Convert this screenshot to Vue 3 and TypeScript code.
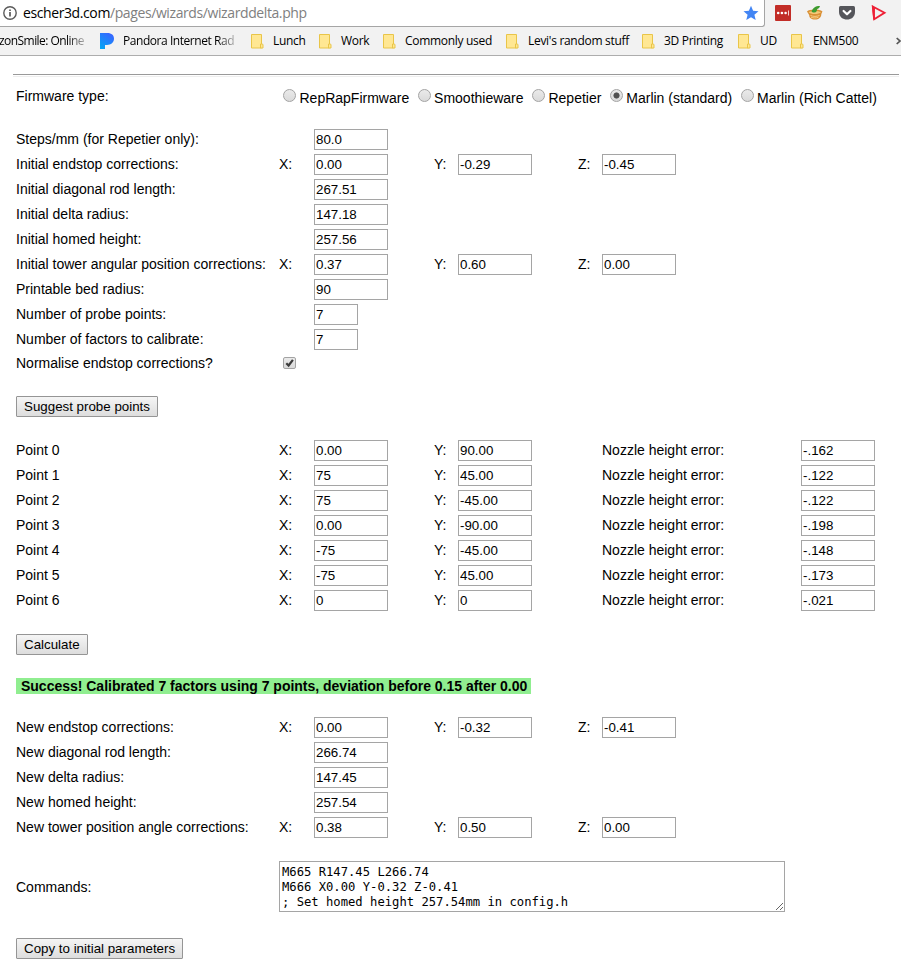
<script setup lang="ts">
import { ref, reactive } from 'vue'

interface Field { axis?: string; value: string; small?: boolean }
interface Row { label: string; fields: Field[] }
interface ProbePoint { x: string; y: string; error: string }
interface Bookmark { name: string; width: number }

const bookmarks: Bookmark[] = [
  { name: 'Lunch', width: 68 },
  { name: 'Work', width: 64 },
  { name: 'Commonly used', width: 123 },
  { name: "Levi's random stuff", width: 136 },
  { name: '3D Printing', width: 96 },
  { name: 'UD', width: 53 },
  { name: 'ENM500', width: 100 },
]

const firmwares: string[] = ['RepRapFirmware', 'Smoothieware', 'Repetier', 'Marlin (standard)', 'Marlin (Rich Cattel)']
const firmware = ref<string>('Marlin (standard)')
const normalise = ref<boolean>(true)

const initial = reactive<Row[]>([
  { label: 'Steps/mm (for Repetier only):', fields: [{ value: '80.0' }] },
  { label: 'Initial endstop corrections:', fields: [{ axis: 'X:', value: '0.00' }, { axis: 'Y:', value: '-0.29' }, { axis: 'Z:', value: '-0.45' }] },
  { label: 'Initial diagonal rod length:', fields: [{ value: '267.51' }] },
  { label: 'Initial delta radius:', fields: [{ value: '147.18' }] },
  { label: 'Initial homed height:', fields: [{ value: '257.56' }] },
  { label: 'Initial tower angular position corrections:', fields: [{ axis: 'X:', value: '0.37' }, { axis: 'Y:', value: '0.60' }, { axis: 'Z:', value: '0.00' }] },
  { label: 'Printable bed radius:', fields: [{ value: '90' }] },
  { label: 'Number of probe points:', fields: [{ value: '7', small: true }] },
  { label: 'Number of factors to calibrate:', fields: [{ value: '7', small: true }] },
])

const points = reactive<ProbePoint[]>([
  { x: '0.00', y: '90.00', error: '-.162' },
  { x: '75', y: '45.00', error: '-.122' },
  { x: '75', y: '-45.00', error: '-.122' },
  { x: '0.00', y: '-90.00', error: '-.198' },
  { x: '-75', y: '-45.00', error: '-.148' },
  { x: '-75', y: '45.00', error: '-.173' },
  { x: '0', y: '0', error: '-.021' },
])

const results = reactive<Row[]>([
  { label: 'New endstop corrections:', fields: [{ axis: 'X:', value: '0.00' }, { axis: 'Y:', value: '-0.32' }, { axis: 'Z:', value: '-0.41' }] },
  { label: 'New diagonal rod length:', fields: [{ value: '266.74' }] },
  { label: 'New delta radius:', fields: [{ value: '147.45' }] },
  { label: 'New homed height:', fields: [{ value: '257.54' }] },
  { label: 'New tower position angle corrections:', fields: [{ axis: 'X:', value: '0.38' }, { axis: 'Y:', value: '0.50' }, { axis: 'Z:', value: '0.00' }] },
])

const commands = ref<string>('M665 R147.45 L266.74\nM666 X0.00 Y-0.32 Z-0.41\n; Set homed height 257.54mm in config.h')
</script>

<template>
  <div class="window">
    <header class="toolbar">
      <div class="address">
        <svg class="info" width="16" height="16" viewBox="0 0 16 16">
          <circle cx="8" cy="8" r="6.2" fill="none" stroke="#5a5a5a" stroke-width="1.4" />
          <path d="M8 7v4.4M8 4.4v1.6" stroke="#5a5a5a" stroke-width="1.7" />
        </svg>
        <span class="url">escher3d.com<span class="path">/pages/wizards/wizarddelta.php</span></span>
        <svg class="star" width="16" height="16" viewBox="0 0 16 16">
          <path d="M8 .8l2.1 5 5.4.4-4.1 3.5 1.3 5.3L8 12.2 3.3 15l1.3-5.3L.5 6.2l5.4-.4z" fill="#4285f4" />
        </svg>
      </div>
      <div class="extensions">
        <svg width="16" height="16" viewBox="0 0 16 16">
          <rect width="16" height="16" rx="1" fill="#c22d27" />
          <circle cx="3.2" cy="8" r="1.3" fill="#fff" /><circle cx="6.9" cy="8" r="1.3" fill="#fff" /><circle cx="10.6" cy="8" r="1.3" fill="#fff" />
          <path d="M13.5 5.5v5" stroke="#f5cfcd" />
        </svg>
        <svg width="16" height="16" viewBox="0 0 16 16">
          <path d="M0 6.5c2-2.2 12-2.8 15.5 0-.6 1.2-1 2-1.2 2.7.2 3-2.6 5.3-6.3 5.3S2.2 12.8 2.2 10C1.500 8.600.7 7.600 0 6.500z" fill="#d98f34" />
          <path d="M1.500 7c3-1.500 9.500-1.500 12.500 0-2 2.800-10.500 2.800-12.500 0z" fill="#f3c878" />
          <path d="M3.500 10.500c3 1.200 6 1.200 9 0M4 12.200c2.500 1 5.500 1 7.500 0" stroke="#f5cb82" fill="none" />
          <path d="M4.500 6.500C6 3 8 1 13 1c-.5 2-1.500 2.600-3 3 .2 2-.8 3.300-2.500 3.500C6 7.700 5 7 4.500 6.500z" fill="#3d9b2f" />
        </svg>
        <svg width="16" height="16" viewBox="0 0 16 16">
          <path d="M1.500 1h13q1.500 0 1.500 1.500V7c0 10-16 10-16 0V2.500Q0 1 1.500 1z" fill="#55565b" />
          <path d="M4.600 6l3.400 3.300L11.400 6" fill="none" stroke="#fff" stroke-width="2.200" stroke-linecap="round" stroke-linejoin="round" />
        </svg>
        <svg width="16" height="16" viewBox="0 0 16 16">
          <path d="M1.800 1.500L13.500 7.700 3.200 14.200z" fill="none" stroke="#ee2036" stroke-width="1.900" />
          <path d="M1 .5l3 2.300L3.800 13 2.300 15z" fill="#ee2036" />
        </svg>
      </div>
    </header>

    <nav class="bookmarks">
      <span class="mark smile">zonSmile: Online</span>
      <svg class="pandora" width="14" height="16" viewBox="0 0 14 16">
        <defs>
          <linearGradient id="pandora" x1="0" y1="1" x2=".6" y2="0">
            <stop offset="0" stop-color="#00a9f4" /><stop offset="1" stop-color="#3668ff" />
          </linearGradient>
        </defs>
        <path d="M0 0h7.500C11.500 0 14 2.200 14 5.600c0 3.900-3 6.400-7 6.400H5v4H0z" fill="url(#pandora)" />
      </svg>
      <span class="mark radio-mark">Pandora Internet Rad</span>
      <span v-for="b in bookmarks" :key="b.name" class="folder" :style="{ width: b.width + 'px' }">
        <svg width="13" height="15" viewBox="0 0 13 15">
          <path d="M.5.5h10v13.500H.5z" fill="#ffe793" stroke="#e9c548" />
          <path d="M9.500 10h1.600q.9 0 .9.900v3.100H9.500z" fill="#ffe793" stroke="#e9c548" />
        </svg>
        <span>{{ b.name }}</span>
      </span>
      <svg class="more" width="5" height="8" viewBox="0 0 5 8"><path d="M.7 1L3.900 4 .7 7" fill="none" stroke="#555" stroke-width="1.700" /></svg>
    </nav>

    <main class="page">
      <hr class="rule" />

      <div class="firmware">
        <span class="caption">Firmware type:</span>
        <div class="choices">
          <label v-for="f in firmwares" :key="f" class="choice">
            <input v-model="firmware" class="radio" type="radio" name="firmware" :value="f" />
            <span>{{ f }}</span>
          </label>
        </div>
      </div>

      <section class="block">
        <div v-for="r in initial" :key="r.label" class="row">
          <span>{{ r.label }}</span>
          <template v-for="(f, i) in r.fields" :key="i">
            <span>{{ f.axis }}</span>
            <input v-model="f.value" class="text" :class="{ small: f.small }" type="text" />
          </template>
        </div>
        <label class="row check-row">
          <span>Normalise endstop corrections?</span>
          <span class="check">
            <input v-model="normalise" class="box" type="checkbox" />
            <svg v-if="normalise" class="tick" width="13" height="12" viewBox="0 0 13 12"><path d="M3.300 6.200l2.300 2.300 4.300-5.700" fill="none" stroke="#3c3c3c" stroke-width="2.200" /></svg>
          </span>
        </label>
      </section>

      <button class="action suggest" type="button">Suggest probe points</button>

      <section class="block">
        <div v-for="(p, i) in points" :key="i" class="row">
          <span>Point {{ i }}</span>
          <span>X:</span><input v-model="p.x" class="text" type="text" />
          <span>Y:</span><input v-model="p.y" class="text" type="text" />
          <span class="error-label">Nozzle height error:</span>
          <input v-model="p.error" class="text" type="text" />
        </div>
      </section>

      <button class="action calculate" type="button">Calculate</button>

      <p class="status">Success! Calibrated 7 factors using 7 points, deviation before 0.15 after 0.00</p>

      <section class="block">
        <div v-for="r in results" :key="r.label" class="row">
          <span>{{ r.label }}</span>
          <template v-for="(f, i) in r.fields" :key="i">
            <span>{{ f.axis }}</span>
            <input v-model="f.value" class="text" type="text" />
          </template>
        </div>
      </section>

      <div class="commands">
        <span class="caption">Commands:</span>
        <textarea v-model="commands" class="output" spellcheck="false"></textarea>
      </div>

      <button class="action" type="button">Copy to initial parameters</button>
    </main>
  </div>
</template>

<style>
html, body { background: #fff; overflow: hidden; }
</style>

<style scoped>
.window { width: 901px; height: 973px; overflow: hidden; box-sizing: border-box; background: #fff; color: #000; font: 14px/16px "Liberation Sans", Arial, sans-serif; }
.toolbar { display: flex; height: 27px; background: #f2f2f2; font-family: "Open Sans", "Noto Sans", sans-serif; }
.address { box-sizing: border-box; display: flex; align-items: center; width: 765px; height: 27px; padding: 0 5px 0 2px; background: #fff; border: solid #a5a5a5; border-width: 0 1px 1px 0; border-bottom-right-radius: 3px; }
.url { margin-left: 5px; font-size: 14px; line-height: 20px; letter-spacing: -.4px; white-space: nowrap; }
.path { color: #808080; }
.star { margin-left: auto; }
.extensions { display: flex; align-items: center; gap: 16px; padding-left: 10px; height: 26px; }
.bookmarks { box-sizing: border-box; display: flex; align-items: center; height: 29px; background: #f2f2f2; border-bottom: 1px solid #adadad; font: 12px/16px "Open Sans", "Noto Sans", sans-serif; letter-spacing: -.3px; white-space: nowrap; overflow: hidden; }
.mark { overflow: hidden; flex: none; }
.smile { width: 87px; margin-left: -1px; letter-spacing: -.55px; mask-image: linear-gradient(to right, #000 68px, transparent 92px); }
.pandora { flex: none; margin: 0 9px 0 14px; }
.radio-mark { width: 114px; margin-right: 14px; letter-spacing: -.45px; mask-image: linear-gradient(to right, #000 94px, transparent 118px); }
.folder { display: flex; align-items: center; flex: none; gap: 9px; }
.more { margin-left: auto; flex: none; }
.page { padding: 18px 2px 0 16px; }
.rule { height: 1px; margin: 0 0 0 -3px; border: solid #9a9a9a; border-width: 1px 0 0; border-bottom: 1px solid #eee; }
.firmware { display: flex; margin-top: 11px; height: 41px; }
.caption { width: 263px; flex: none; }
.choices { display: flex; gap: 8.8px; padding: 2px 0 0 4.4px; }
.choice { display: flex; gap: 3.1px; height: 16px; white-space: nowrap; }
.radio, .box { appearance: none; flex: none; box-sizing: border-box; margin: 0; border: 1px solid #a3a3a3; background: linear-gradient(#eaeaea, #dadada); }
.radio { width: 13px; height: 13px; border-radius: 50%; margin-top: -1px; }
.radio:checked { background: radial-gradient(circle, #515151 0 2.700px, transparent 3.400px), linear-gradient(#eaeaea, #dadada); }
.block { display: grid; gap: 4px; }
.row { display: grid; grid-template-columns: 263px 35px 120px 24px 120px 24px 199px; align-items: center; height: 21px; white-space: nowrap; }
.row > span { padding-bottom: 1px; }
.row > .error-label { grid-column: 6 / 8; margin-left: 24px; }
.row:has(.error-label) { grid-template-columns: 263px 35px 120px 24px 120px 24px 199px 74px; }
.text { box-sizing: border-box; width: 74px; height: 21px; margin: 0; padding: 1px; border: 1px solid #a5a5a5; background: #fff; color: #000; font: 13.333px "Liberation Sans", Arial, sans-serif; }
.small { width: 44px; }
.check-row { height: 18px; }
.row.check-row > span { padding-bottom: 0; }
.check { position: relative; display: block; width: 13px; height: 12px; margin-left: 3.5px; }
.box { display: block; width: 13px; height: 12px; border-radius: 2px; }
.tick { position: absolute; left: 0; top: 0; }
.action { display: block; box-sizing: border-box; height: 21px; padding: 0 7px; margin: 0; border: 1px solid #959595; border-radius: 1px; background: linear-gradient(#f5f5f5, #ddd); color: #000; font: 13.333px/18px "Liberation Sans", Arial, sans-serif; }
.suggest { margin: 24px 0 23px; }
.calculate { margin-top: 23px; }
.status { width: fit-content; margin: 23px 0; padding: 0 4px 0 5px; background: #90ee90; font-weight: bold; letter-spacing: -.013px; white-space: nowrap; }
.commands { display: flex; align-items: center; margin: 23px 0 26px; }
.commands > .caption { padding-top: 1px; }
.output { box-sizing: border-box; width: 506px; height: 51px; margin: 0; padding: 3px 2px; border: 1px solid #a5a5a5; color: #000; background: #fff; font: 12.200px/15px "DejaVu Sans Mono", monospace; resize: both; overflow: hidden; }
</style>
